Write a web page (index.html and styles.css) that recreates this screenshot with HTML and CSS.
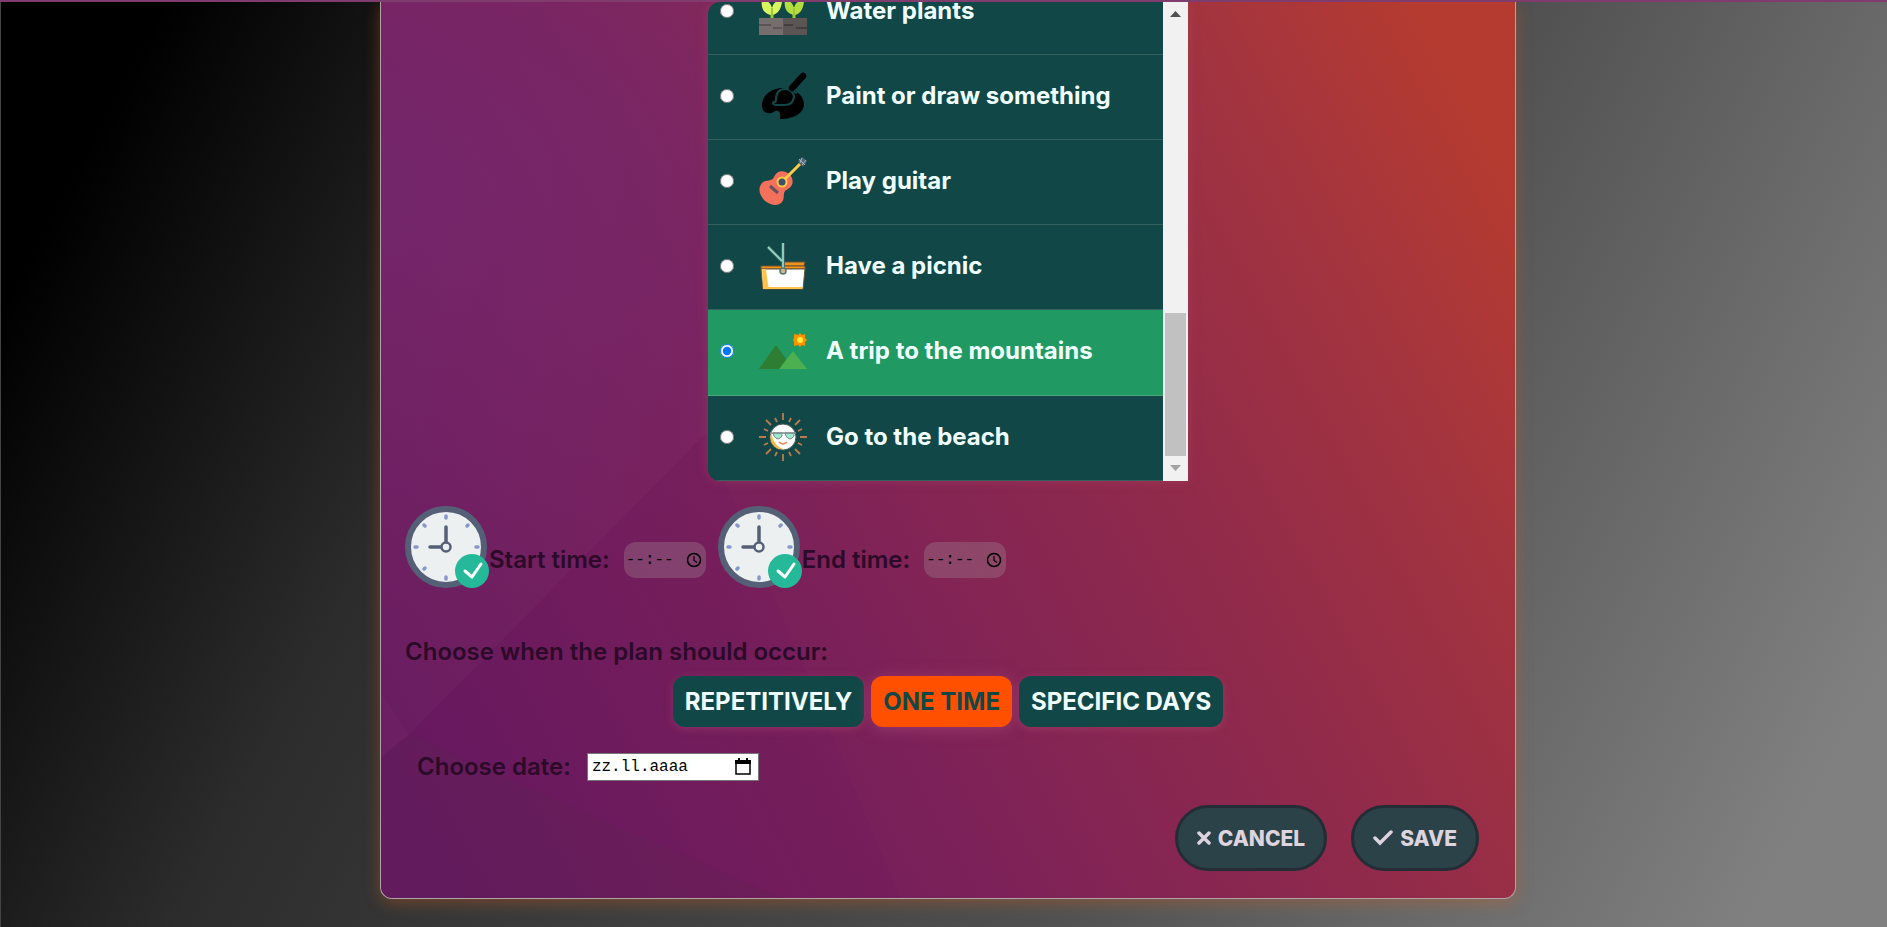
FILE: index.html
```html
<!DOCTYPE html>
<html lang="en">
<head>
<meta charset="utf-8">
<title>Plan an activity</title>
<link rel="stylesheet" href="styles.css">
</head>
<body>
<svg class="sprites" aria-hidden="true">
  <defs>
    <symbol id="clock" viewBox="0 0 84 84">
      <circle cx="41" cy="41" r="38" fill="#ecf0f1" stroke="#556076" stroke-width="6"/>
      <g stroke="#8697cb" stroke-width="3.500" stroke-linecap="round">
        <path d="M41 10v2M41 71v2M10 41h2M71 41h2M19 19l1 1M62 20l1-1M19 63l1-1"/>
      </g>
      <path d="M41 21v16M25 41h12" stroke="#556076" stroke-width="3.500" stroke-linecap="round"/>
      <circle cx="41" cy="41" r="4.500" fill="#ecf0f1" stroke="#556076" stroke-width="2.500"/>
      <circle cx="67" cy="65" r="17" fill="#26b999"/>
      <path d="M60 65l7 6 9-13" fill="none" stroke="#fff" stroke-width="3" stroke-linecap="round" stroke-linejoin="round"/>
    </symbol>
    <symbol id="dial" viewBox="0 0 16 16">
      <circle cx="8" cy="8" r="6.500" fill="none" stroke="#000" stroke-width="1.500"/>
      <path d="M8 4v4.500l3 2" fill="none" stroke="#000" stroke-width="1.200"/>
    </symbol>
  </defs>
</svg>
<main class="page">
  <form class="modal">
    <svg class="backdrop" viewBox="0 0 1136 896" preserveAspectRatio="none" aria-hidden="true">
      <path d="M0 0H490V248L325 432 28 733 0 690Z" fill="#8a3a72" opacity=".1"/>
      <path d="M0 690L28 733 0 755Z" fill="#8a3a72" opacity=".18"/>
      <path d="M28 733L400 896H0V755Z" fill="#5c1f50" opacity=".25"/>
      <path d="M325 432L28 733 400 896H520Z" fill="#6c1466" opacity=".12"/>
    </svg>
    <div class="picker">
      <div class="options" role="radiogroup" aria-label="Activity">
        <label class="option"><input type="radio" name="activity">
          <svg class="pic" viewBox="0 0 48 48"><path d="M13 31V20M35 31V20" stroke="#9bcb2c" stroke-width="3"/><path d="M12 28C3 26 2 19 3 13c7 0 10 5 10 10 0-6 4-10 10-10 0 8-4 15-11 15Z" fill="#d8f560"/><path d="M35 28C26 26 25 19 26 13c6 0 9 5 9 10 0-6 4-10 10-10 0 8-4 15-10 15Z" fill="#b4de40"/><path d="M13 31V21M35 31V21" stroke="#9bcb2c" stroke-width="2"/><path d="M0 31h24v17H0Z" fill="#766e6e"/><path d="M24 31h24v17H24Z" fill="#5b5555"/><path d="M0 38h12M14 41h9" stroke="#5b5555" stroke-width="2"/><path d="M25 38h9M37 41h11" stroke="#443d3d" stroke-width="2"/></svg>
          <span>Water plants</span></label>
        <label class="option"><input type="radio" name="activity">
          <svg class="pic" viewBox="0 0 48 48"><path d="M3 33C3 23 13 16 24 16s21 7 21 16-10 15-24 15c1-7-1-9-5-8-5 4-13 3-13-6Z"/><path d="M17 28c0-8 4-11 9-11s9 3 9 8c-1 6-5 8-9 8H17q-5-1-2-3 2 0 2-2Z" stroke="#114847" stroke-width="2.200"/><path d="M30 19L43 4" stroke="#114847" stroke-width="9"/><path d="M31 18l7 3" stroke="#114847" stroke-width="2"/><path d="M33 16L44 4" stroke="#000" stroke-width="6.500" stroke-linecap="round"/></svg>
          <span>Paint or draw something</span></label>
        <label class="option"><input type="radio" name="activity">
          <svg class="pic" viewBox="0 0 48 48"><path d="M15 20c3-7 10-7 15-3 5 4 5 12-1 15-7 3-2 8-6 13-4 5-12 3-17-1-5-5-8-12-3-18 4-4 10-1 12-6Z" fill="#f3705a"/><path d="M23 25L41 7" stroke="#ffc94a" stroke-width="3"/><circle cx="23" cy="25" r="4.500" fill="#3e5368" stroke="#ffc94a" stroke-width="2"/><path d="M39 4l4-4 5 4-4 6Z" fill="#53657b"/><path d="M40 2l6 6M43 1L41 6M47 3l-4 5" stroke="#a5b0b8" stroke-width="1"/><path d="M11 29l8 7" stroke="#655260" stroke-width="3"/></svg>
          <span>Play guitar</span></label>
        <label class="option"><input type="radio" name="activity">
          <svg class="pic" viewBox="0 0 48 48"><path d="M25 20h21l-1 4H25Z" fill="#ef941d" stroke="#685039"/><path d="M2 24h44v3H2Z" fill="#f39417" stroke="#685039"/><path d="M2 27h44l-2 20H4Z" fill="#fff" stroke="#685039"/><path d="M3 27h4l2 16 1 2h34l-1 2H4Z" fill="#ffc34b"/><path d="M9 5l14 14M24 1v27" stroke="#456565" stroke-width="3.500"/><path d="M9 5l14 14M24 1v27" stroke="#91d8c1" stroke-width="1.800"/><circle cx="24" cy="29" r="3" fill="#d5b48d" stroke="#50796f" stroke-width="1.500"/></svg>
          <span>Have a picnic</span></label>
        <label class="option option-on"><input type="radio" name="activity" checked>
          <svg class="pic" viewBox="0 0 48 48"><path d="M0 42L17 18 34 42Z" fill="#2e7d32"/><path d="M20 42L34 24 48 42Z" fill="#4caf50"/><path d="M41 6l2 2 3-1v4l2 2-2 2v4l-3-1-2 2-2-2-4 1v-4l-1-2 1-2V7l4 1Z" fill="#ff9100"/><circle cx="41" cy="13" r="3" fill="#ffeb3b"/></svg>
          <span>A trip to the mountains</span></label>
        <label class="option"><input type="radio" name="activity">
          <svg class="pic" viewBox="0 0 48 48"><g stroke="#bd7a50" stroke-width="1.800"><path d="M24 0v7M24 41v7M0 24h7M41 24h7M7 7l5 5M36 36l5 5M7 41l5-5M36 12l5-5M16 5l2 4M30 39l2 4M5 32l4-2M39 18l4-2M5 16l4 2M39 30l4 2M16 43l2-4M30 9l2-4"/></g><circle cx="24" cy="24" r="13" fill="#fff" stroke="#4b5d60"/><path d="M12 20c-3 10 5 18 14 16-7 0-12-7-14-16Z" fill="#ffb637"/><path d="M14 20h9v3q-4 6-8 0ZM26 20h9v3q-4 6-8 0Z" fill="#9be9cf" stroke="#7d8b8e"/><path d="M11 20h26" stroke="#7d8b8e" stroke-width="1.500"/><path d="M20 29q4 4 8 0" fill="none" stroke="#ef8355" stroke-width="1.500"/></svg>
          <span>Go to the beach</span></label>
      </div>
      <div class="scrollbar" aria-hidden="true">
        <svg class="arrow" viewBox="0 0 25 25"><path d="M7 15L12.500 9 18 15Z" fill="#505050"/></svg>
        <div class="track"><div class="thumb"></div></div>
        <svg class="arrow" viewBox="0 0 25 25"><path d="M7 9L12.500 15 18 9Z" fill="#a3a3a3"/></svg>
      </div>
    </div>

    <div class="times">
      <div class="time"><svg class="clock"><use href="#clock"/></svg><label for="start">Start time:</label>
        <span class="time-field"><input id="start" type="text" value="--:--"><svg class="dial"><use href="#dial"/></svg></span></div>
      <div class="time"><svg class="clock"><use href="#clock"/></svg><label for="end">End time:</label>
        <span class="time-field"><input id="end" type="text" value="--:--"><svg class="dial"><use href="#dial"/></svg></span></div>
    </div>

    <p class="question">Choose when the plan should occur:</p>
    <div class="modes">
      <button type="button" class="mode">REPETITIVELY</button>
      <button type="button" class="mode mode-on">ONE TIME</button>
      <button type="button" class="mode">SPECIFIC DAYS</button>
    </div>

    <div class="date">
      <label for="date">Choose date:</label>
      <span class="date-field"><input id="date" type="text" value="zz.ll.aaaa"><svg class="calendar" viewBox="0 0 16 18"><path d="M1 3h14v13H1Z" fill="none" stroke="#000" stroke-width="1.500"/><path d="M0 2h16v4H0ZM3 0h2v3H3ZM11 0h2v3h-2Z"/></svg></span>
    </div>

    <div class="actions">
      <button type="button" class="action"><svg class="cross" viewBox="0 0 14 14"><path d="M2 2l10 10M12 2L2 12" stroke="#ded4de" stroke-width="3.500" stroke-linecap="round"/></svg>CANCEL</button>
      <button type="button" class="action"><svg class="tick" viewBox="0 0 20 16"><path d="M2 8l5 5L18 2" fill="none" stroke="#ded4de" stroke-width="3.500" stroke-linecap="round"/></svg>SAVE</button>
    </div>
  </form>
</main>
</body>
</html>
```
FILE: styles.css
```css
* { box-sizing: border-box; }

body {
  margin: 0;
  min-height: 100vh;
  font-family: Inter, "Open Sans", sans-serif;
  font-size: 24px;
  line-height: 28px;
  color: #2c0a29;
  border-top: 2px solid #803c6c;
  background: linear-gradient(118deg, #000 7%, #2c2c2c 28%, #505050 64%, #808080 94%);
  overflow: hidden;
}

.sprites { display: none; }

.page { border-left: 1px solid #444; padding: 0 371px 28px 379px; min-height: calc(100vh - 2px); }

.modal {
  position: relative;
  padding: 0 36px 27px 24px;
  border: 1px solid #b3a3a8;
  border-top: 0;
  border-radius: 0 0 12px 12px;
  background:
    radial-gradient(ellipse at 0% 20%, rgba(114, 38, 110, .8), rgba(114, 38, 110, 0) 42%),
    linear-gradient(62deg, #651a60 5%, #7c2159 38%, #922b4a 64%, #a3343f 80%, #b53b30 94%);
  box-shadow: 0 4px 16px rgba(200, 90, 30, .4);
}

.backdrop { position: absolute; inset: 0; width: 100%; height: 100%; border-radius: 0 0 12px 12px; }
.picker, .times, .question, .modes, .date, .actions { position: relative; }

.picker {
  display: flex;
  width: 480px;
  height: 479px;
  margin: 0 auto;
  left: 6px;
  border-radius: 12px 0 0 12px;
  box-shadow: 0 0 12px rgba(180, 80, 110, .35);
}

.options {
  flex: 1;
  display: flex;
  flex-direction: column;
  justify-content: flex-end;
  overflow: hidden;
  border-radius: 12px 0 0 12px;
  background: #114847;
}

.option {
  flex: none;
  display: flex;
  align-items: center;
  height: 85px;
  padding: 0 12px 3px;
  border-bottom: 1px solid #36605d;
  color: #f0ffff;
  font-weight: 700;
}
.option-on { height: 86px; background: #209963; border-color: #4ea57c; }

.option input { width: 14px; height: 14px; margin: 0 25px 0 0; }
.pic { width: 48px; height: 48px; margin-right: 19px; overflow: hidden; }

.scrollbar { display: flex; flex-direction: column; width: 25px; background: #f1f1f1; }
.arrow { display: block; width: 25px; height: 25px; }
.track { flex: 1; display: flex; align-items: flex-end; padding: 0 2px; }
.thumb { width: 100%; height: 143px; background: #c1c1c1; }

.times { display: flex; gap: 12px; margin-top: 25px; font-weight: 600; }
.time { display: flex; align-items: flex-end; }
.time label { padding-bottom: 16px; }
.clock { width: 84px; height: 84px; }

.time-field {
  display: flex;
  align-items: center;
  width: 82px;
  height: 36px;
  margin: 0 0 12px 14px;
  padding: 0 4px 0 2px;
  border-radius: 12px;
  background: rgba(160, 140, 150, .33);
}
.time-field input, .date-field input {
  flex: 1;
  min-width: 0;
  padding: 0;
  border: 0;
  outline: 0;
  background: none;
  color: #000;
  font: 16px "Liberation Mono", monospace;
}
.dial { width: 16px; height: 16px; }

.question { margin: 48px 0 10px; font-weight: 600; }

.modes { display: flex; justify-content: center; gap: 7px; left: 6px; }
.mode {
  height: 51px;
  padding: 0 12px;
  border: 0;
  border-radius: 12px;
  background: #114847;
  color: #f0ffff;
  font: 700 24px Inter, sans-serif;
  box-shadow: 0 2px 8px rgba(180, 80, 110, .4);
}
.mode-on { background: #ff5000; color: #114847; box-shadow: 0 2px 16px rgba(180, 80, 130, .5); }

.date { display: flex; align-items: center; gap: 16px; margin: 26px 0 24px 12px; font-weight: 600; }
.date-field {
  display: flex;
  align-items: center;
  width: 172px;
  height: 28px;
  padding: 0 7px 0 4px;
  border: 1px solid #767676;
  background: #fff;
}
.calendar { width: 16px; height: 18px; }

.actions { display: flex; justify-content: flex-end; gap: 24px; }
.action {
  display: flex;
  align-items: center;
  gap: 7px;
  height: 66px;
  padding: 0 19px;
  border: 3px solid #242d35;
  border-radius: 33px;
  background: #2a4248;
  color: #ded4de;
  font: 800 21px Inter, sans-serif;
}
.cross { width: 14px; height: 14px; }
.tick { width: 20px; height: 16px; }
```
